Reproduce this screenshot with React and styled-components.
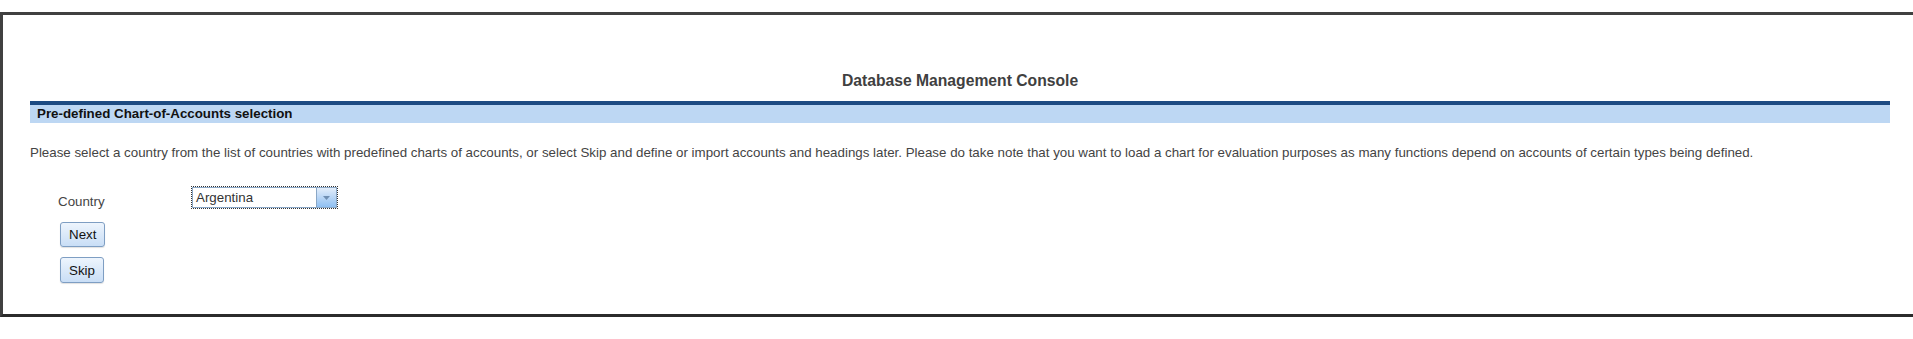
import React from "react";
import styled, { createGlobalStyle } from "styled-components";

const Global = createGlobalStyle`
  html, body { margin: 0; padding: 0; background: #ffffff; }
  body { font-family: "Liberation Sans", Arial, sans-serif; }
`;

const Frame = styled.div`
  margin-top: 12px;
  border-top: 3px solid #404040;
  border-left: 3px solid #404040;
  border-bottom: 3px solid #2b2b2b;
  padding: 57px 23px 31px 27px;
  background: #fff;
`;

const Title = styled.div`
  text-align: center;
  font-size: 15.7px;
  line-height: 17px;
  font-weight: bold;
  color: #404040;
  margin-bottom: 12px;
`;

const Band = styled.div`
  border-top: 4px solid #1d4b82;
  background: #bdd7f3;
  height: 18px;
  line-height: 18px;
  padding-left: 7px;
  font-size: 13.33px;
  font-weight: bold;
  color: #111;
`;

const Para = styled.p`
  margin: 22px 0 0 0;
  font-size: 13.33px;
  line-height: 15px;
  color: #444;
`;

const Form = styled.div`
  margin-top: 26px;
  padding-left: 28px;
  display: flex;
  flex-direction: column;
  align-items: flex-start;
`;

const FieldRow = styled.div`
  display: grid;
  grid-template-columns: 133px auto;
  align-items: center;
`;

const Label = styled.span`
  font-size: 13.33px;
  line-height: 15px;
  color: #444;
  padding-top: 7px;
`;

const SelectBox = styled.div`
  display: flex;
  align-items: stretch;
  box-sizing: border-box;
  width: 147px;
  height: 23px;
  border: 1px dotted #333;
`;

const SelectInner = styled.div`
  flex: 1;
  display: flex;
  border: 1px solid #8aa7c6;
  background: #fff;
`;

const SelectText = styled.span`
  flex: 1;
  font-size: 13.33px;
  line-height: 19px;
  color: #333;
  padding-left: 3px;
`;

const DropButton = styled.span`
  width: 19px;
  border-left: 1px solid #8aa7c6;
  background: linear-gradient(#e3eefb 0%, #b9d6f6 50%, #8fc0f2 100%);
  display: flex;
  align-items: center;
  justify-content: center;
`;

const Button = styled.button`
  margin-top: ${(p) => p.$top}px;
  margin-left: 2px;
  height: ${(p) => p.$h}px;
  padding: 0 8px;
  font-family: "Liberation Sans", Arial, sans-serif;
  font-size: 13.33px;
  color: #111;
  border: 1px solid #7e9ec3;
  border-radius: 3px;
  background: linear-gradient(#eef5fd 0%, #dbe9f9 50%, #c9def6 100%);
  box-shadow: 0 1px 1px rgba(0,0,0,0.12);
`;

export default function App() {
  return (
    <>
      <Global />
      <Frame>
        <Title>Database Management Console</Title>
        <Band>Pre-defined Chart-of-Accounts selection</Band>
        <Para>
          Please select a country from the list of countries with predefined charts of accounts, or select Skip and define or import accounts and headings later. Please do take note that you want to load a chart for evaluation purposes as many functions depend on accounts of certain types being defined.
        </Para>
        <Form>
          <FieldRow>
            <Label>Country</Label>
            <SelectBox>
              <SelectInner>
                <SelectText>Argentina</SelectText>
                <DropButton>
                  <svg width="7" height="4" viewBox="0 0 7 4">
                    <path d="M0 0 L7 0 L3.5 4 Z" fill="#6f8fb3" />
                  </svg>
                </DropButton>
              </SelectInner>
            </SelectBox>
          </FieldRow>
          <Button $top={13} $h={25}>Next</Button>
          <Button $top={10} $h={26}>Skip</Button>
        </Form>
      </Frame>
    </>
  );
}
